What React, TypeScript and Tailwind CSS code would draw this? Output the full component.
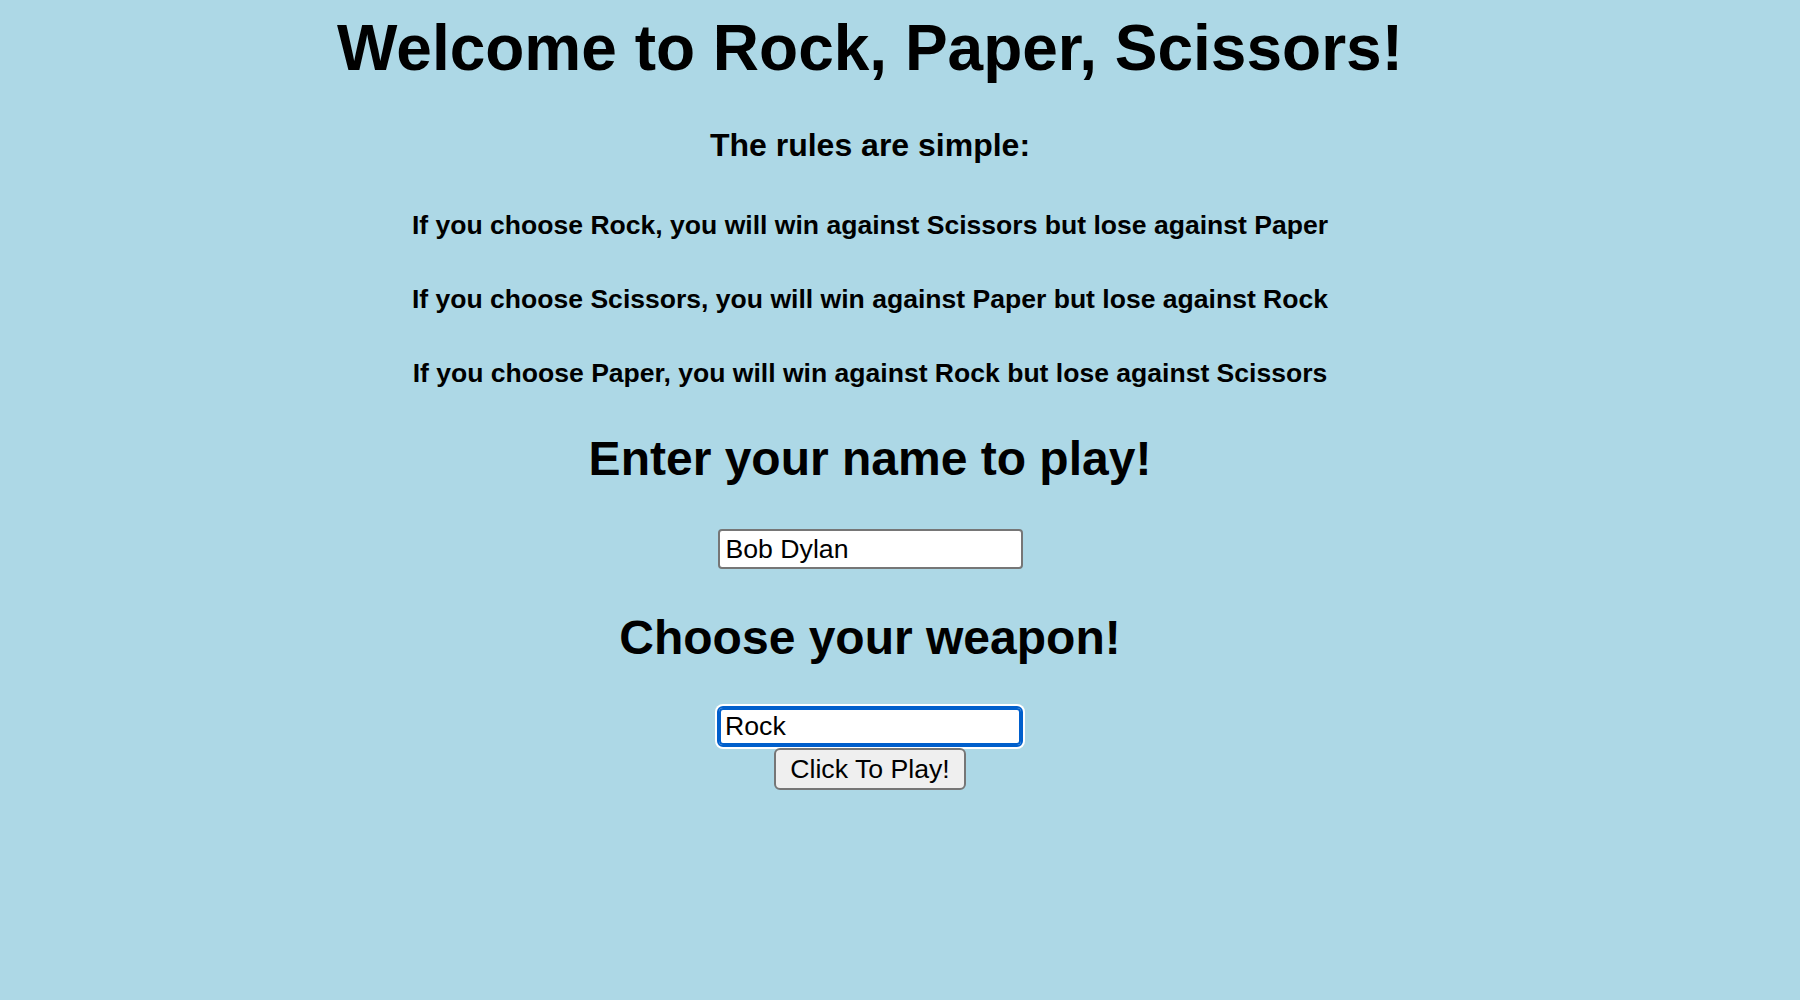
import { useState } from "react";

const rules = [
  "If you choose Rock, you will win against Scissors but lose against Paper",
  "If you choose Scissors, you will win against Paper but lose against Rock",
  "If you choose Paper, you will win against Rock but lose against Scissors",
];

const App = () => {
  const [name, setName] = useState("Bob Dylan");
  const [weapon, setWeapon] = useState("Rock");

  return (
    <div className="min-h-screen bg-[#add8e6] text-black font-['Liberation_Sans',Arial,sans-serif]">
      <div className="flex flex-col items-center pr-[60px] pt-[12px] text-center">
        <h1 className="text-[64px] leading-[72px] font-bold">
          Welcome to Rock, Paper, Scissors!
        </h1>

        <h4 className="mt-[43px] text-[32px] leading-[36px] font-bold">
          The rules are simple:
        </h4>

        {/* Rules list */}
        <div className="mt-[47px] flex flex-col gap-[44px]">
          {rules.map((rule) => (
            <h5 key={rule} className="text-[26.56px] leading-[30px] font-bold">
              {rule}
            </h5>
          ))}
        </div>

        <h2 className="mt-[44px] text-[48px] leading-[54px] font-bold">
          Enter your name to play!
        </h2>
        <input
          type="text"
          value={name}
          onChange={(e) => setName(e.target.value)}
          className="mt-[43px] h-[40px] w-[305px] rounded-[4px] border-2 border-[#767676] bg-white px-[6px] text-[26.67px] outline-none"
        />

        <h2 className="mt-[42px] text-[48px] leading-[54px] font-bold">
          Choose your weapon!
        </h2>
        <input
          type="text"
          value={weapon}
          onChange={(e) => setWeapon(e.target.value)}
          className="mt-[41px] h-[41px] w-[306px] rounded-[6px] border-2 border-[#005fcc] bg-white px-[6px] text-[26.67px] outline-none shadow-[inset_0_0_0_2px_#005fcc,0_0_0_2px_#ffffff]"
        />
        <button
          type="button"
          className="mt-[1px] h-[42px] rounded-[6px] border-2 border-[#767676] bg-[#efefef] px-[14px] text-[26.67px] leading-none"
        >
          Click To Play!
        </button>
      </div>
    </div>
  );
};

export default App;
